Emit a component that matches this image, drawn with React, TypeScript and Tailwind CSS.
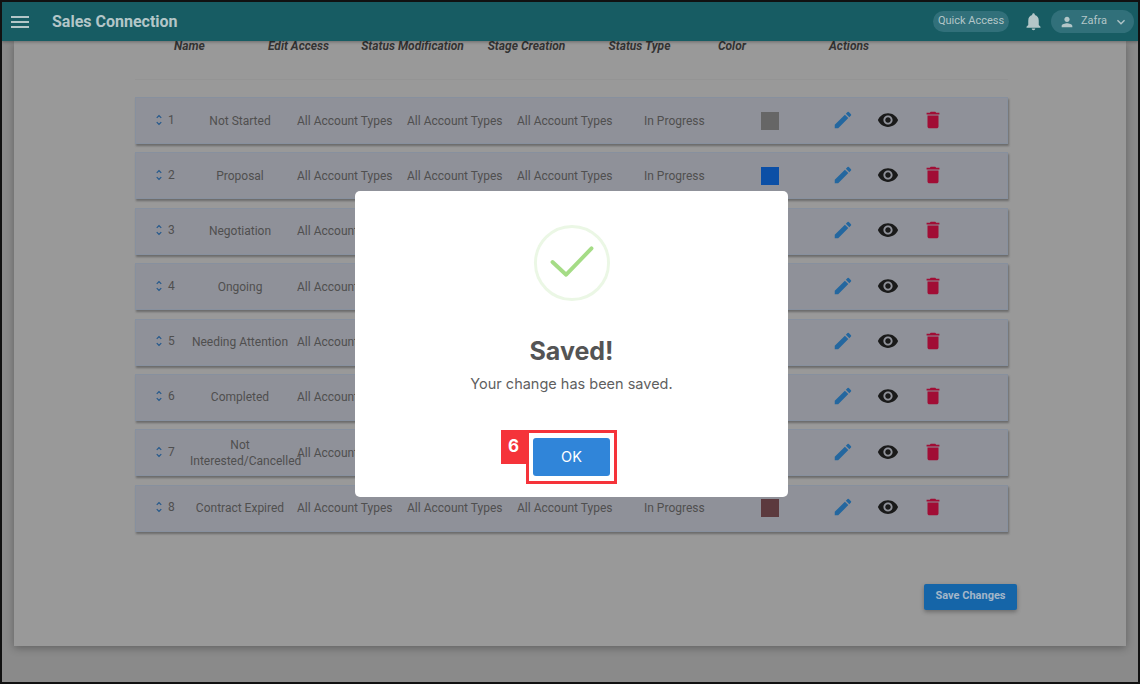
const rows = [
  { id: 1, name: "Not Started", color: "bg-[#666666]" },
  { id: 2, name: "Proposal", color: "bg-[#0b4fa6]" },
  { id: 3, name: "Negotiation", color: "bg-[#666666]" },
  { id: 4, name: "Ongoing", color: "bg-[#666666]" },
  { id: 5, name: "Needing Attention", color: "bg-[#666666]" },
  { id: 6, name: "Completed", color: "bg-[#666666]" },
  { id: 7, name: "Not Interested/Cancelled", color: "bg-[#666666]" },
  { id: 8, name: "Contract Expired", color: "bg-[#5c3a3e]" },
];

const Icon = ({ d, className }: { d: string; className: string }) => (
  <svg viewBox="0 0 24 24" fill="currentColor" className={className}>
    <path d={d} />
  </svg>
);

const paths = {
  menu: "M3 18h18v-2H3v2zm0-5h18v-2H3v2zm0-7v2h18V6H3z",
  bell: "M12 22c1.1 0 2-.9 2-2h-4c0 1.1.9 2 2 2zm6-6v-5c0-3.07-1.63-5.64-4.5-6.32V4c0-.83-.67-1.5-1.5-1.5s-1.5.67-1.5 1.5v.68C7.64 5.36 6 7.92 6 11v5l-2 2v1h16v-1l-2-2z",
  person: "M12 12c2.21 0 4-1.79 4-4s-1.79-4-4-4-4 1.79-4 4 1.79 4 4 4zm0 2c-2.67 0-8 1.34-8 4v2h16v-2c0-2.66-5.33-4-8-4z",
  chevron: "M16.59 8.59 12 13.17 7.41 8.59 6 10l6 6 6-6z",
  unfold: "M12 5.83 15.17 9l1.41-1.41L12 3 7.41 7.59 8.83 9 12 5.83zm0 12.34L8.83 15l-1.41 1.41L12 21l4.59-4.59L15.17 15 12 18.17z",
  edit: "M3 17.25V21h3.75L17.81 9.94l-3.75-3.75L3 17.25zM20.71 7.04c.39-.39.39-1.02 0-1.41l-2.34-2.34a.9959.9959 0 0 0-1.41 0l-1.83 1.83 3.75 3.75 1.83-1.83z",
  eye: "M12 4.5C7 4.5 2.73 7.61 1 12c1.73 4.39 6 7.5 11 7.5s9.27-3.11 11-7.5c-1.73-4.39-6-7.5-11-7.5zM12 17c-2.76 0-5-2.24-5-5s2.24-5 5-5 5 2.24 5 5-2.24 5-5 5zm0-8c-1.66 0-3 1.34-3 3s1.34 3 3 3 3-1.34 3-3-1.34-3-3-3z",
  trash: "M6 19c0 1.1.9 2 2 2h8c1.1 0 2-.9 2-2V7H6v12zM19 4h-3.5l-1-1h-5l-1 1H5v2h14V4z",
};

const headers = [
  { label: "Name", w: "w-[109px]" },
  { label: "Edit Access", w: "w-[109px]" },
  { label: "Status Modification", w: "w-[119px]" },
  { label: "Stage Creation", w: "w-[109px]" },
  { label: "Status Type", w: "w-[117px]" },
  { label: "Color", w: "w-[68px]" },
  { label: "Actions", w: "w-[166px]" },
];

const Row = ({ id, name, color }: { id: number; name: string; color: string }) => (
  <div className="flex h-[47px] w-[873px] items-center border border-[#87909e] bg-[#8f9199] pl-[17px] text-[12px] leading-[16px] text-[#4f4f4f] shadow-[1px_2px_2px_rgba(0,0,0,0.3)]">
    <Icon d={paths.unfold} className="mb-0.5 h-[14px] w-[14px] shrink-0 text-[#24588c] -ml-px" />
    <span className="mb-0.5 ml-[2px] w-[22px] shrink-0">{id}</span>
    <div className="w-[100px] shrink-0 text-center">{name}</div>
    <div className="ml-[7px] w-[110px] shrink-0 whitespace-nowrap">All Account Types</div>
    <div className="w-[110px] shrink-0 whitespace-nowrap">All Account Types</div>
    <div className="w-[127px] shrink-0 whitespace-nowrap">All Account Types</div>
    <div className="w-[117px] shrink-0 whitespace-nowrap">In Progress</div>
    <div className={`h-[18px] w-[18px] shrink-0 ${color}`} />
    <div className="mb-0.5 ml-[53px] flex items-center">
      <Icon d={paths.edit} className="h-[22px] w-[22px] text-[#24679f]" />
      <Icon d={paths.eye} className="ml-[23px] h-[22px] w-[22px] text-[#1a1a1a]" />
      <Icon d={paths.trash} className="ml-[23px] h-[22px] w-[22px] text-[#a10d35]" />
    </div>
  </div>
);

const App = () => {
  return (
    <div className="relative flex h-[684px] w-[1140px] flex-col overflow-hidden border-2 border-[#111] bg-[#8a8a8a] font-['Roboto',sans-serif]">
      <header className="z-10 flex h-[39px] shrink-0 items-center bg-[#175c63] pr-[4px] text-[#b3c6c8] shadow-[0_1px_3px_rgba(0,0,0,0.3)]">
        <Icon d={paths.menu} className="ml-[6px] h-[24px] w-[24px]" />
        <span className="ml-[20px] text-[16px] font-bold">Sales Connection</span>
        <div className="ml-auto flex items-center">
          <div className="flex h-[21px] w-[76px] items-center justify-center rounded-full bg-[#31707a] text-[11px]">Quick Access</div>
          <Icon d={paths.bell} className="ml-[14px] h-[21px] w-[21px]" />
          <div className="ml-[7px] flex h-[23px] w-[83px] items-center rounded-full bg-[#31707a] pl-[8px] text-[11px]">
            <Icon d={paths.person} className="h-[16px] w-[16px]" />
            <span className="ml-[6px]">Zafra</span>
            <Icon d={paths.chevron} className="ml-[6px] h-[16px] w-[16px]" />
          </div>
        </div>
      </header>

      <main className="mx-[12px] mb-[36px] flex-1 overflow-hidden bg-[#999999] shadow-[0_2px_8px_rgba(0,0,0,0.3)]">
        <div className="-mt-[9px] ml-[121px] flex h-[48px] w-[873px] border-b border-[#949494] text-center text-[12px] leading-[16px] font-bold italic text-[#333333]">
          {headers.map((h) => (
            <div key={h.label} className={`${h.w} shrink-0 pt-[6px]`}>{h.label}</div>
          ))}
        </div>
        <div className="ml-[121px] mt-[17px] flex flex-col gap-[8.4px]">
          {rows.map((r) => (
            <Row key={r.id} {...r} />
          ))}
        </div>
        <div className="mt-[52px] flex justify-end pr-[109px]">
          <button className="h-[26px] w-[93px] rounded-[2px] bg-[#1565a8] text-[11px] font-bold text-[#a3b6c9] shadow-[0_2px_4px_rgba(0,0,0,0.3)]">Save Changes</button>
        </div>
      </main>

      {/* modal */}
      <div className="absolute left-[353px] top-[189px] flex h-[306px] w-[433px] flex-col items-center rounded-[5px] bg-white font-['Inter',sans-serif]">
        <svg viewBox="0 0 80 80" className="mt-[33px] h-[78px] w-[78px]">
          <circle cx="40" cy="40" r="37.5" fill="none" stroke="#ebf7e5" strokeWidth="3" />
          <path d="M20 39 L34 52 L60 25" fill="none" stroke="#a5dc86" strokeWidth="4" strokeLinecap="round" strokeLinejoin="round" />
        </svg>
        <h2 className="mt-[32px] text-[25px] leading-[34px] font-bold text-[#545454]">Saved!</h2>
        <p className="mt-[6px] text-[14.5px] leading-[20px] text-[#5f5f5f]">Your change has been saved.</p>
        <div className="relative mt-[36px] flex h-[54px] w-[91px] items-center justify-center border-[3px] border-[#f5333a]">
          <span className="absolute -left-[28px] -top-[3px] flex h-[34px] w-[25px] items-center justify-center bg-[#f5333a] text-[17px] font-bold text-white">6</span>
          <button className="h-[38px] w-[77px] rounded-[3px] bg-[#3085d9] text-[14.5px] text-white">OK</button>
        </div>
      </div>
    </div>
  );
};

export default App;
